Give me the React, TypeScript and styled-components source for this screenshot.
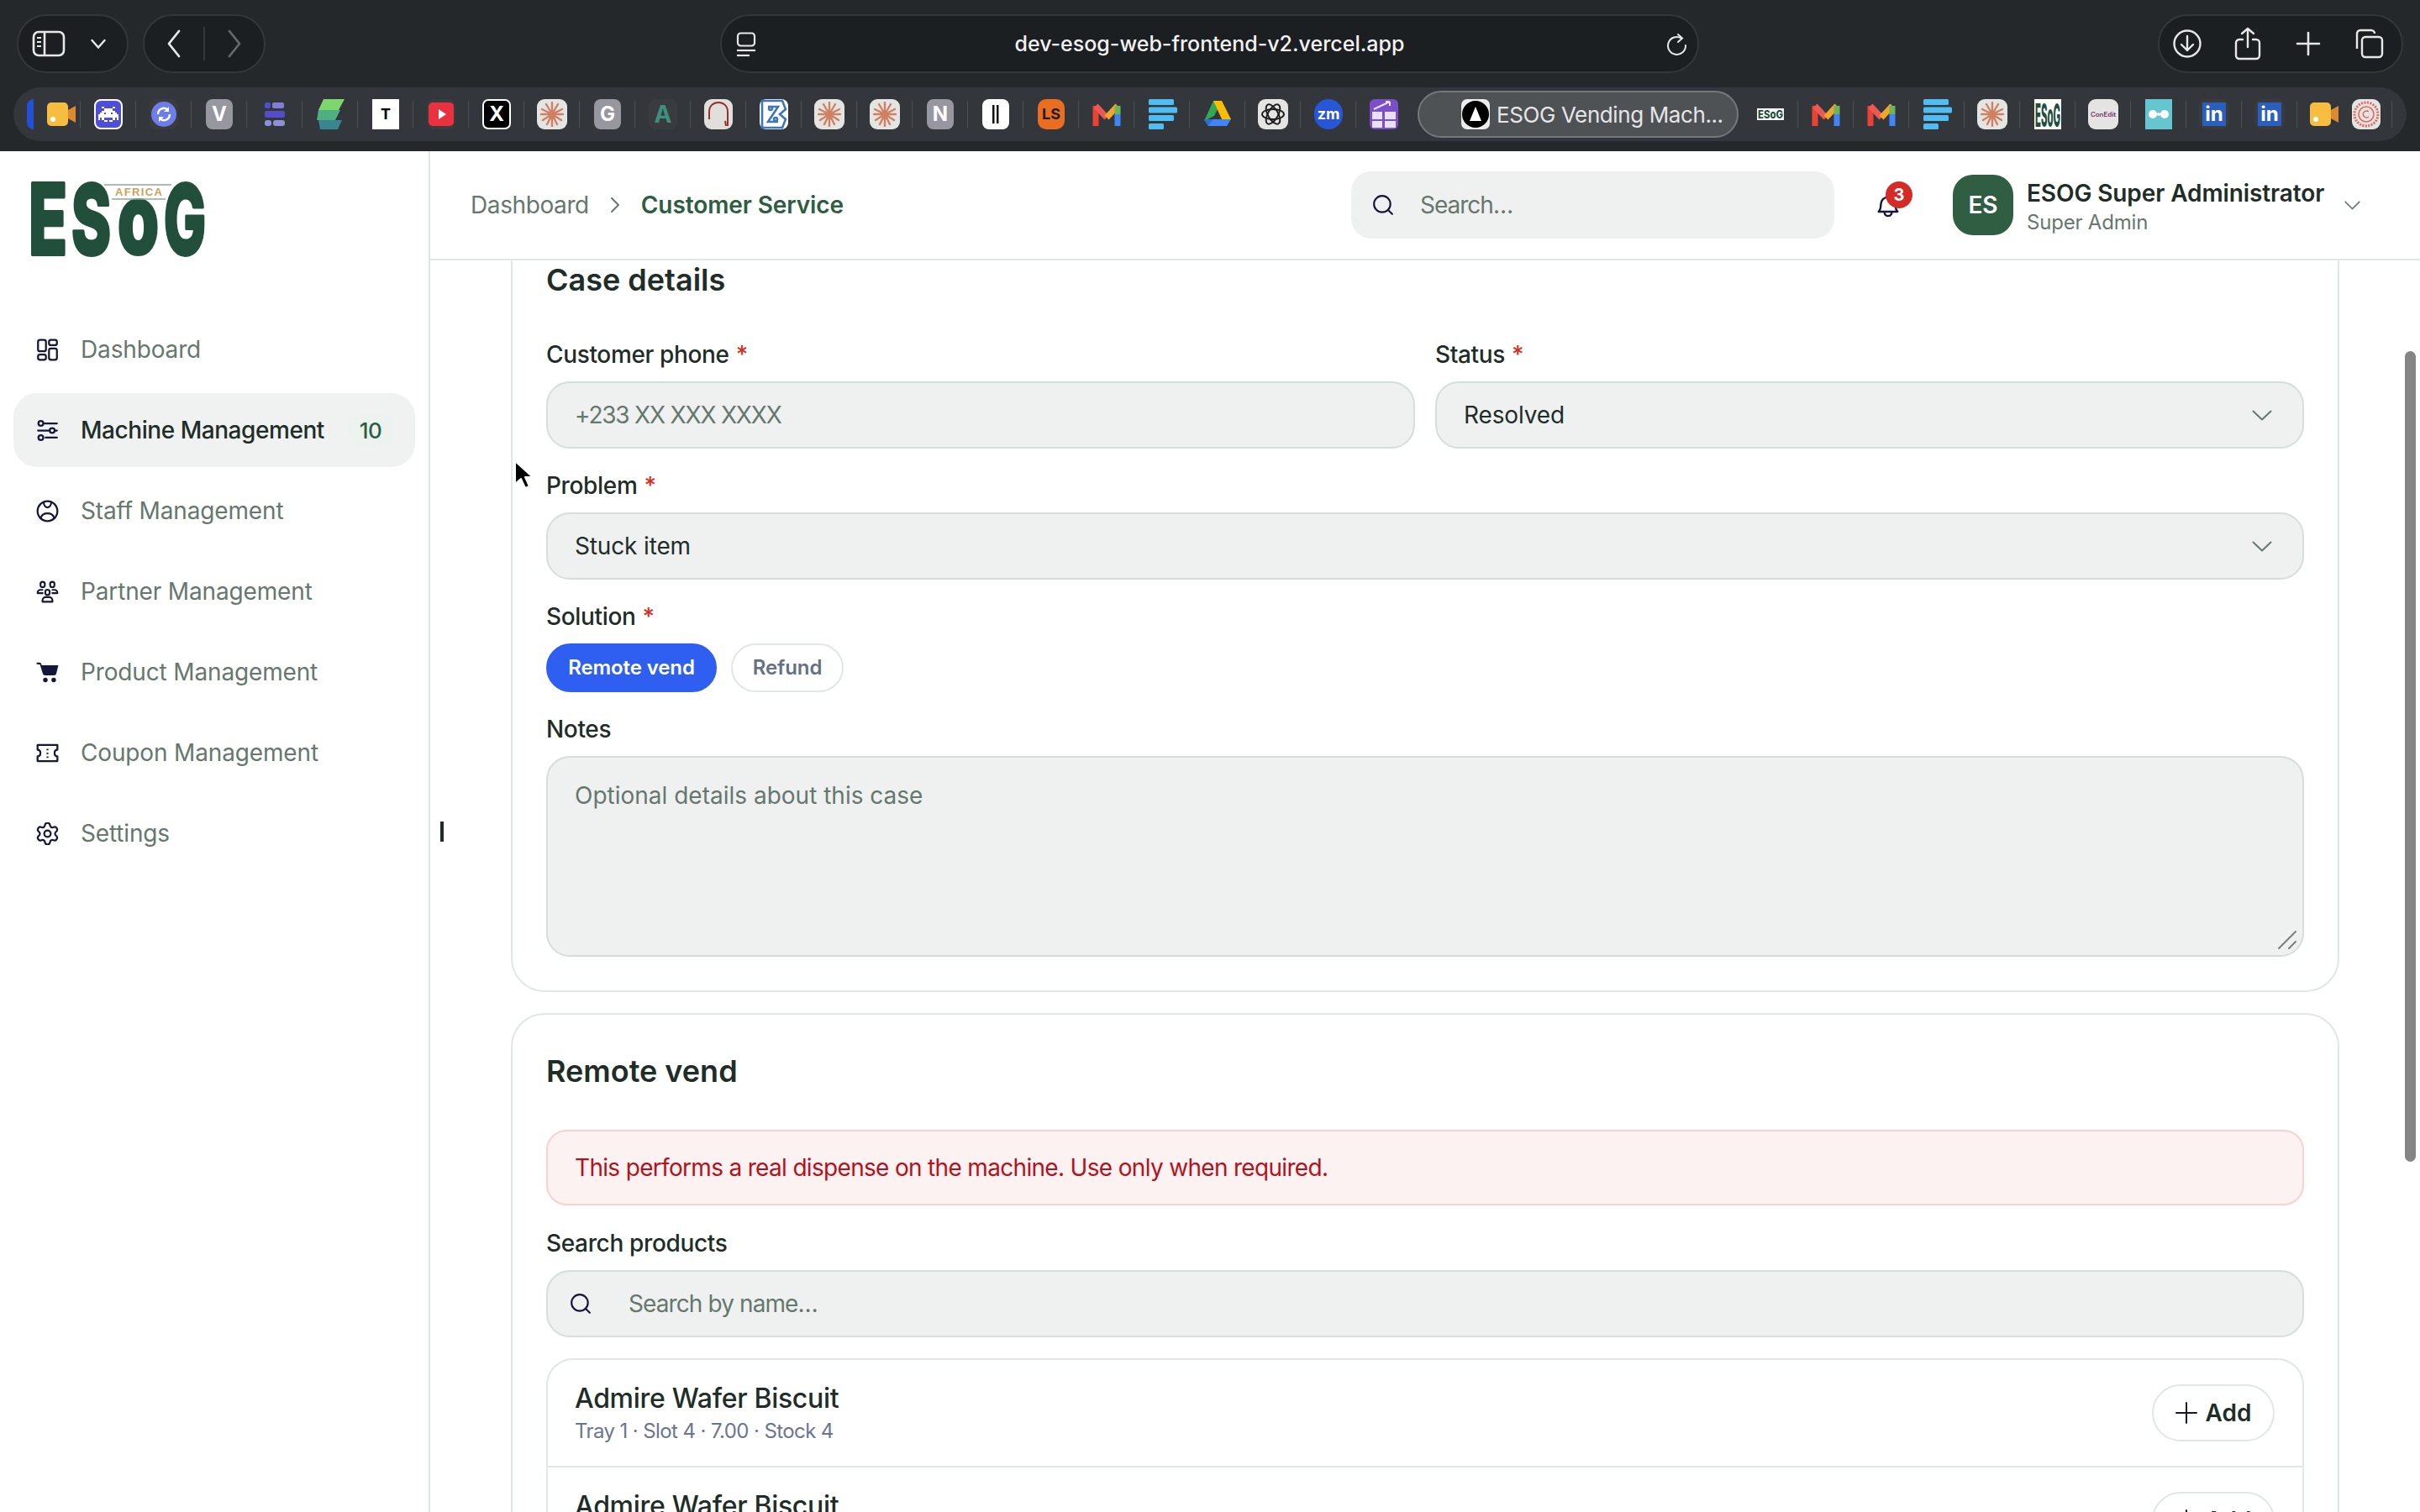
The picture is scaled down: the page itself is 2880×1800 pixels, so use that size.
import React from 'react'
import styled, { createGlobalStyle } from 'styled-components'
import { Settings } from 'lucide-react'

const Global = createGlobalStyle`
  html, body { margin: 0; padding: 0; background: #fff; }
  body { font-family: Inter, "Liberation Sans", sans-serif; color: #1f2d28; -webkit-font-smoothing: antialiased; }
  * { box-sizing: border-box; }
`

const Page = styled.div`
  position: relative;
  width: 2880px;
  height: 1800px;
  overflow: hidden;
  background: #fff;
  display: flex;
  flex-direction: column;
`

/* browser chrome */
const Chrome = styled.div`
  height: 180px;
  flex: none;
  background: #25282b;
  display: flex;
  flex-direction: column;
  padding-top: 17px;
`
const TopRow = styled.div`
  height: 70px;
  padding: 0 20px;
  display: flex;
  align-items: center;
  gap: 17px;
`
const Group = styled.div<{ $w: number; $ml?: number }>`
  width: ${p => p.$w}px;
  margin-left: ${p => p.$ml ?? 0}px;
  height: 70px;
  flex: none;
  display: flex;
  align-items: center;
  border-radius: 35px;
  background: #1c1f21;
  border: 2px solid #33373a;
`
const LeftGroup = styled(Group)`
  padding-left: 16px;
  gap: 30px;
`
const NavGroup = styled(Group)`
  justify-content: center;
  gap: 26px;
`
const NavDivider = styled.span`
  width: 2px;
  height: 40px;
  background: #34383b;
`
const UrlBar = styled(Group)`
  position: relative;
  justify-content: center;
  font-size: 25px;
  font-weight: 500;
  color: #f2f2f2;
`
const UrlLeading = styled.span`
  position: absolute;
  left: 17px;
  top: 19px;
  display: flex;
`
const UrlTrailing = styled.span`
  position: absolute;
  right: 12px;
  top: 20px;
  display: flex;
`
const ToolGroup = styled(Group)``
const ToolSlot = styled.span`
  width: 72px;
  display: flex;
  justify-content: center;
  &:first-child { margin-left: -3px; }
`
const BookmarkBar = styled.div`
  margin: 17px 0 0 16px;
  width: 2848px;
  height: 64px;
  border-radius: 32px;
  background: #33363a;
  display: flex;
  align-items: center;
`
const Cell = styled.div<{ $sep?: boolean }>`
  width: 66px;
  height: 64px;
  flex: none;
  display: flex;
  align-items: center;
  justify-content: center;
  position: relative;
  &::after {
    content: '';
    display: ${p => (p.$sep === false ? 'none' : 'block')};
    position: absolute;
    right: 0;
    top: 16px;
    bottom: 16px;
    width: 1px;
    background: #4c4f53;
  }
`
const FirstCell = styled(Cell)`
  width: 80px;
  justify-content: flex-end;
  padding-right: 6px;
  gap: 16px;
`
const LastCell = styled(Cell)`
  width: 113px;
  gap: 16px;
`
const Tile = styled.div<{ $bg?: string; $fg?: string; $r?: number; $w?: number; $h?: number; $fs?: number }>`
  width: ${p => p.$w ?? 34}px;
  height: ${p => p.$h ?? 36}px;
  flex: none;
  background: ${p => p.$bg ?? 'transparent'};
  color: ${p => p.$fg ?? '#fff'};
  border-radius: ${p => p.$r ?? 8}px;
  font-size: ${p => p.$fs ?? 24}px;
  font-weight: 700;
  display: flex;
  align-items: center;
  justify-content: center;
  line-height: 1;
`
const FramedTile = styled(Tile)`
  border: 2px solid #fff;
`
const Sliver = styled.div`
  width: 8px;
  height: 36px;
  background: #2450d8;
  border-radius: 8px 0 0 8px;
`
const ActiveTab = styled.div`
  width: 382px;
  height: 56px;
  margin-left: 7px;
  margin-right: 5px;
  flex: none;
  border-radius: 28px;
  background: #4e5255;
  border: 2px solid #76797c;
  padding-left: 50px;
  display: flex;
  align-items: center;
  gap: 8px;
  font-size: 26px;
  letter-spacing: -0.4px;
  color: #e6e6e6;
  white-space: nowrap;
`

/* app */
const Shell = styled.div`
  flex: 1;
  min-height: 0;
  display: flex;
`
const Sidebar = styled.aside`
  width: 512px;
  flex: none;
  border-right: 2px solid #e1e7e5;
  padding: 37px 16px 0;
`
const LogoWrap = styled.div`
  height: 90px;
  margin: 0 0 65px 20px;
`
const Nav = styled.nav`
  display: flex;
  flex-direction: column;
  gap: 8px;
  width: 478px;
`
const NavItem = styled.div<{ $active?: boolean }>`
  height: 88px;
  border-radius: 28px;
  padding: 0 25px 0 27px;
  display: flex;
  align-items: center;
  gap: 26px;
  font-size: 28px;
  letter-spacing: ${p => (p.$active ? -0.45 : -0.15)}px;
  white-space: nowrap;
  font-weight: ${p => (p.$active ? 500 : 400)};
  color: ${p => (p.$active ? '#1f2d28' : '#66776e')};
  background: ${p => (p.$active ? '#eff2f0' : 'transparent')};
  svg { width: 27px; height: 27px; flex: none; color: #15173a; }
`
const NavLabel = styled.span`
  flex: 1;
`
const CountPill = styled.span`
  width: 56px;
  height: 38px;
  border-radius: 19px;
  background: #ecf3ee;
  color: #2d5e42;
  font-size: 26px;
  font-weight: 500;
  display: flex;
  align-items: center;
  justify-content: center;
`
const Main = styled.main`
  flex: 1;
  min-width: 0;
  display: flex;
  flex-direction: column;
`
const Header = styled.header`
  height: 130px;
  flex: none;
  border-bottom: 2px solid #e1e7e5;
  padding: 0 71px 0 48px;
  display: flex;
  align-items: center;
  position: relative;
  z-index: 1;
  background: #fff;
`
const Crumbs = styled.div`
  flex: 1;
  display: flex;
  align-items: center;
  gap: 24px;
  font-size: 28px;
  color: #66776e;
`
const CrumbHome = styled.span`
  letter-spacing: -0.4px;
`
const CrumbCurrent = styled.span`
  color: #2d5e42;
  font-weight: 600;
  letter-spacing: -0.1px;
`
const HeaderSearch = styled.div`
  width: 575px;
  height: 80px;
  border-radius: 24px;
  background: #eff1f0;
  display: flex;
  align-items: center;
  gap: 31px;
  padding-left: 25px;
  font-size: 28px;
  letter-spacing: -1px;
  color: #66776e;
`
const BellWrap = styled.div`
  position: relative;
  width: 26px;
  height: 32px;
  margin: 4px 64px 0 51px;
  color: #15173a;
`
const Badge = styled.span`
  position: absolute;
  left: 10px;
  top: -14px;
  width: 32px;
  height: 32px;
  border-radius: 50%;
  background: #d42b27;
  color: #fff;
  font-size: 20px;
  font-weight: 700;
  display: flex;
  align-items: center;
  justify-content: center;
`
const User = styled.div`
  display: flex;
  align-items: center;
  gap: 16px;
`
const Avatar = styled.div`
  width: 72px;
  height: 72px;
  border-radius: 24px;
  background: #2f5e43;
  color: #fff;
  font-size: 28px;
  font-weight: 600;
  display: flex;
  align-items: center;
  justify-content: center;
`
const UserText = styled.div`
  display: flex;
  flex-direction: column;
  width: 362px;
`
const UserName = styled.span`
  font-size: 28px;
  font-weight: 600;
  line-height: 42px;
  letter-spacing: -0.1px;
  white-space: nowrap;
`
const UserRole = styled.span`
  font-size: 24px;
  line-height: 28px;
  letter-spacing: -0.2px;
  color: #66776e;
`
const Content = styled.div`
  flex: 1;
  min-height: 0;
  overflow: hidden;
  padding: 0 96px;
`
const Card = styled.section`
  border: 2px solid #e1e7e5;
  border-radius: 40px;
  padding: 40px;
  & + & { margin-top: 25px; }
  &:first-child { margin-top: -46px; }
`
const CardTitle = styled.h2`
  margin: 0 0 41px;
  font-size: 36px;
  line-height: 54px;
  font-weight: 600;
`
const Row = styled.div`
  display: grid;
  grid-template-columns: 1fr 1fr;
  gap: 24px;
`
const Field = styled.div`
  margin-bottom: 23px;
  &:last-child { margin-bottom: 0; }
`
const Label = styled.div`
  height: 40px;
  padding-top: 1px;
  font-size: 28px;
  line-height: 40px;
  font-weight: 500;
  letter-spacing: -0.35px;
  margin-bottom: 13px;
`
const Star = styled.span`
  color: #d92d20;
  margin-left: 8px;
`
const Control = styled.div<{ $muted?: boolean }>`
  height: 80px;
  border-radius: 28px;
  background: #eff1f0;
  border: 2px solid #d5dedb;
  padding: 0 36px 0 32px;
  display: flex;
  align-items: center;
  justify-content: space-between;
  font-size: 28px;
  letter-spacing: -0.15px;
  color: ${p => (p.$muted ? '#66776e' : '#1f2d28')};
`
const PhoneHint = styled.span`
  letter-spacing: -1.2px;
`
const Pills = styled.div`
  display: flex;
  gap: 17px;
`
const Pill = styled.div<{ $active?: boolean }>`
  height: 58px;
  width: ${p => (p.$active ? 203 : 134)}px;
  padding-bottom: 2px;
  border-radius: 29px;
  font-size: 24px;
  font-weight: 600;
  letter-spacing: -0.1px;
  display: flex;
  align-items: center;
  justify-content: center;
  background: ${p => (p.$active ? '#2f5ff1' : '#fff')};
  color: ${p => (p.$active ? '#fff' : '#667085')};
  border: 2px solid ${p => (p.$active ? '#2f5ff1' : '#e1e7e5')};
`
const NotesBox = styled.div`
  position: relative;
  height: 239px;
  border-radius: 28px;
  background: #eff1f0;
  border: 2px solid #d5dedb;
  padding: 25px 32px;
  font-size: 28px;
  line-height: 40px;
  color: #66776e;
`
const Grip = styled.svg`
  position: absolute;
  right: 6px;
  bottom: 6px;
`
const Alert = styled.div`
  height: 90px;
  margin: 43px 0 24px;
  border-radius: 24px;
  background: #fdf2f2;
  border: 2px solid #fbd0d0;
  padding: 0 32px;
  display: flex;
  align-items: center;
  font-size: 28px;
  letter-spacing: -0.68px;
  color: #b3121d;
`
const SearchControl = styled(Control)`
  justify-content: flex-start;
  gap: 44px;
  padding-left: 26px;
  letter-spacing: -0.9px;
`
const ProductList = styled.div`
  margin-top: 25px;
  border: 2px solid #e1e7e5;
  border-radius: 32px;
`
const ProductRow = styled.div`
  height: 128px;
  padding: 0 33px 0 32px;
  display: flex;
  align-items: center;
  justify-content: space-between;
  border-bottom: 2px solid #e1e7e5;
`
const ProductName = styled.div`
  font-size: 32px;
  line-height: 44px;
  font-weight: 500;
  letter-spacing: -0.3px;
`
const ProductMeta = styled.div`
  font-size: 24px;
  line-height: 34px;
  letter-spacing: -0.6px;
  color: #6b7590;
`
const AddButton = styled.div`
  width: 146px;
  height: 68px;
  border-radius: 34px;
  border: 2px solid #e1e7e5;
  display: flex;
  align-items: center;
  justify-content: center;
  gap: 10px;
  font-size: 28px;
  font-weight: 600;
`

/* overlays */
const ScrollThumb = styled.div`
  position: absolute;
  left: 2862px;
  top: 418px;
  width: 13px;
  height: 965px;
  border-radius: 7px;
  background: #858585;
`
const Pointer = styled.svg`
  position: absolute;
  left: 610px;
  top: 546px;
`
const TextCaret = styled.div`
  position: absolute;
  left: 524px;
  top: 978px;
  width: 4px;
  height: 24px;
  background: #1f2d28;
`

const SearchGlyph = ({ size = 26 }: { size?: number }) => (
  <svg width={size} height={size} viewBox='0 0 24 24' fill='none' stroke='#15173a' strokeWidth='2' strokeLinecap='round' style={{ flex: 'none' }}>
    <circle cx='11' cy='11' r='9' />
    <path d='M18 18l4 4' />
  </svg>
)

const Chevron = ({ w = 24, h = 13 }: { w?: number; h?: number }) => (
  <svg width={w} height={h} viewBox='0 0 24 13' fill='none' stroke='#66776e' strokeWidth='2' strokeLinecap='round' strokeLinejoin='round' preserveAspectRatio='none'>
    <path d='M1.5 1.5L12 11.5 22.5 1.5' />
  </svg>
)

const dashboardIcon = (
  <svg viewBox='0 0 24 24' fill='none' stroke='currentColor' strokeWidth='2'>
    <rect x='2' y='1.5' width='8.4' height='12' rx='2' />
    <rect x='2' y='17' width='8.4' height='5.5' rx='2' />
    <rect x='13.6' y='1.5' width='8.4' height='5.5' rx='2' />
    <rect x='13.6' y='10.5' width='8.4' height='12' rx='2' />
  </svg>
)
const machineIcon = (
  <svg viewBox='0 0 24 24' fill='none' stroke='currentColor' strokeWidth='2' strokeLinecap='round'>
    <circle cx='5' cy='4.5' r='2.6' />
    <path d='M8 4.5h14M2 12h12M20 12h2M10 19.5h12' />
    <circle cx='17' cy='12' r='2.6' />
    <circle cx='5' cy='19.5' r='2.6' />
  </svg>
)
const staffIcon = (
  <svg viewBox='0 0 24 24' fill='none' stroke='currentColor' strokeWidth='2' strokeLinecap='round'>
    <circle cx='12' cy='12' r='10.5' />
    <path d='M8 2.5c0 3 1.6 5.5 4 5.5s4-2.5 4-5.5' />
    <path d='M5 19c1-3 3.2-4.6 7-4.6s6 1.6 7 4.6' />
  </svg>
)
const partnerIcon = (
  <svg viewBox='0 0 24 24' fill='none' stroke='currentColor' strokeWidth='1.9' strokeLinecap='round' strokeLinejoin='round'>
    <rect x='4.6' y='1.5' width='4.6' height='5.6' rx='2.3' />
    <rect x='14.8' y='1.5' width='4.6' height='5.6' rx='2.3' />
    <rect x='9.7' y='9.8' width='4.6' height='5.6' rx='2.3' />
    <path d='M6.7 10H4.4C3 10 1.5 11.4 1.5 13.4h5.4M17.3 10h2.3c1.4 0 2.9 1.4 2.9 3.4h-5.4' />
    <path d='M6.7 22.5v-1.2c0-2 1.6-3.6 3.6-3.6h3.4c2 0 3.6 1.6 3.6 3.6v1.2z' />
  </svg>
)
const cartIcon = (
  <svg viewBox='0 0 24 24' fill='currentColor'>
    <path d='M0.5 1.5H3.4c1 0 1.8.6 2.1 1.6l.4 1.4H23.5L21.4 13c-.3 1.2-1.3 2-2.6 2H9.6c-1.2 0-2.3-.8-2.6-2L4 3.6 0.5 3.4z' />
    <circle cx='9.8' cy='20' r='2.4' />
    <circle cx='18.6' cy='20' r='2.4' />
  </svg>
)
const couponIcon = (
  <svg viewBox='0 0 24 24' fill='none' stroke='currentColor' strokeWidth='2' strokeLinejoin='round'>
    <path d='M1.5 3.5h21v5c-1.8 0-3 1.5-3 3.5s1.2 3.5 3 3.5v5h-21v-5c1.8 0 3-1.5 3-3.5s-1.2-3.5-3-3.5z' />
    <path d='M12 7.5v1.5M12 11.5v1.5M12 15.5v1.5' />
  </svg>
)

const navItems = [
  { label: 'Dashboard', icon: dashboardIcon },
  { label: 'Machine Management', icon: machineIcon, count: 10, active: true },
  { label: 'Staff Management', icon: staffIcon },
  { label: 'Partner Management', icon: partnerIcon },
  { label: 'Product Management', icon: cartIcon },
  { label: 'Coupon Management', icon: couponIcon },
  { label: 'Settings', icon: <Settings strokeWidth={1.7} viewBox='1.5 1.5 21 21' /> }
]

const Logo = () => (
  <svg width='220' height='92' viewBox='0 0 220 92' overflow='visible'>
    <g fill='#214f3c' stroke='#214f3c' strokeWidth='4' strokeLinejoin='round' fontFamily='Inter, sans-serif' fontWeight='800'>
      <text x='-2' y='86' fontSize='117' textLength='46' lengthAdjust='spacingAndGlyphs'>E</text>
      <text x='49' y='86' fontSize='115' textLength='47' lengthAdjust='spacingAndGlyphs'>S</text>
      <text x='104' y='85' fontSize='116' textLength='49' lengthAdjust='spacingAndGlyphs'>o</text>
      <text x='159' y='86' fontSize='115' textLength='50' lengthAdjust='spacingAndGlyphs'>G</text>
    </g>
    <path d='M88 3h80M97 20h64' stroke='#8fa99c' strokeWidth='1.5' />
    <text x='101' y='16' fontSize='13' fontWeight='700' fontFamily='"Liberation Sans", sans-serif' fill='#c9a25c' textLength='56' lengthAdjust='spacing'>AFRICA</text>
  </svg>
)

const sunburst = (
  <svg width='28' height='30' viewBox='0 0 28 30' stroke='#d08062' strokeWidth='2.4' strokeLinecap='round'>
    <path d='M14 15V1M14 15v14M14 15L7 3M14 15l7-12M14 15L2 9M14 15l12-6M14 15H1M14 15h13M14 15L3 22M14 15l11 7M14 15L8 27M14 15l6 12' />
  </svg>
)
const gmail = (
  <svg width='36' height='36' viewBox='0 0 36 36' fill='none' strokeWidth='7' strokeLinejoin='round'>
    <path d='M5 32V8' stroke='#ea4335' />
    <path d='M5 8l13 14' stroke='#ea5a55' />
    <path d='M18 22L31 8' stroke='#f0a52c' />
    <path d='M31 8v10' stroke='#6cb35a' />
    <path d='M31 18v14' stroke='#4285f4' />
  </svg>
)
const barsIcon = (
  <svg width='36' height='36' viewBox='0 0 36 36' fill='#4fbcf2'>
    <rect x='2' y='0' width='30' height='7' rx='1.5' />
    <rect x='2' y='9.5' width='34' height='7' rx='1.5' />
    <rect x='2' y='19' width='30' height='7' rx='1.5' />
    <rect x='2' y='29' width='18' height='7' rx='1.5' />
  </svg>
)
const cameraIcon = (
  <svg width='34' height='36' viewBox='0 0 34 36'>
    <rect x='0' y='4' width='25' height='28' rx='5' fill='#f6bd41' />
    <path d='M25 13l9-5v20l-9-5z' fill='#dc8a2e' />
    <circle cx='7' cy='24' r='3' fill='#fff' />
  </svg>
)
const invader = (
  <svg width='24' height='18' viewBox='0 0 11 8' fill='#fff' shapeRendering='crispEdges'>
    <path d='M2 0h1v1H2zM8 0h1v1H8zM3 1h5v1H3zM2 2h7v1H2zM1 3h2v1H1zM4 3h3v1H4zM8 3h2v1H8zM0 4h11v2H0zM0 6h1v1H0zM2 6h1v1H2zM8 6h1v1H8zM10 6h1v1h-1zM3 7h2v1H3zM6 7h2v1H6z' />
  </svg>
)
const syncMark = (
  <svg width='30' height='30' viewBox='0 0 30 30'>
    <circle cx='15' cy='15' r='15' fill='#6e7ee8' />
    <path d='M8 15a7 7 0 0 1 12-5M22 15a7 7 0 0 1-12 5' fill='none' stroke='#fff' strokeWidth='2.4' />
    <path d='M21 6v6h-6zM9 24v-6h6z' fill='#fff' />
  </svg>
)
const gridDots = (
  <svg width='28' height='36' viewBox='0 0 28 36' fill='#5a52e0' opacity='.85'>
    <rect x='2' y='4' width='7' height='7' rx='2' />
    <rect x='11' y='4' width='14' height='7' rx='2' fill='#8f8bf0' />
    <rect x='2' y='14' width='24' height='8' rx='2' />
    <rect x='2' y='25' width='8' height='7' rx='3' fill='#9da0f5' />
    <rect x='12' y='25' width='14' height='7' rx='3' fill='#9da0f5' />
  </svg>
)
const greenStack = (
  <svg width='34' height='36' viewBox='0 0 34 36'>
    <path d='M9 0h25l-7 13H3z' fill='#7ed66e' />
    <path d='M3 13h26l-6 12H1z' fill='#4fae82' />
    <path d='M3 25h28l-5 11H5z' fill='#3a8592' />
  </svg>
)
const ytMark = (
  <svg width='30' height='28' viewBox='0 0 30 28'>
    <rect width='30' height='28' rx='5' fill='#ea3140' />
    <path d='M12 8l9 6-9 6z' fill='#fff' />
  </svg>
)
const archMark = (
  <svg width='28' height='32' viewBox='0 0 28 32' fill='none' stroke='#93312c' strokeWidth='2'>
    <path d='M3 22V13C3 6 8 2 14 2s11 4 11 11v17' />
    <path d='M22 24l1 6' />
  </svg>
)
const bMark = (
  <svg width='32' height='36' viewBox='0 0 32 36' fill='none' stroke='#3d77b8' strokeWidth='2.6'>
    <path d='M2 2h24l4 10-7 6 7 6-4 10H2z' />
    <path d='M9 9h12l-12 18h12' />
    <circle cx='12' cy='11' r='2' />
    <circle cx='18' cy='24' r='2' />
  </svg>
)
const driveMark = (
  <svg width='34' height='36' viewBox='0 0 34 36'>
    <path d='M12 2h10l-9 18-12 6z' fill='#34a853' />
    <path d='M22 2l11 22-10 2L12 2z' fill='#fbbc04' />
    <path d='M1 24h32l-5 8H6z' fill='#4285f4' />
    <path d='M1 24h11l-6 8z' fill='#2b6fd6' />
  </svg>
)
const knot = (
  <svg width='30' height='30' viewBox='0 0 30 30' fill='none' stroke='#1b1b1b' strokeWidth='1.9'>
    <ellipse cx='15' cy='15' rx='13' ry='6' />
    <ellipse cx='15' cy='15' rx='13' ry='6' transform='rotate(60 15 15)' />
    <ellipse cx='15' cy='15' rx='13' ry='6' transform='rotate(120 15 15)' />
  </svg>
)
const calcMark = (
  <svg width='34' height='36' viewBox='0 0 34 36'>
    <rect width='34' height='36' rx='6' fill='#7a4fc9' />
    <rect x='3' y='15' width='12' height='9' fill='#e9e2f7' />
    <rect x='18' y='15' width='13' height='9' fill='#e9e2f7' />
    <rect x='3' y='26' width='12' height='8' fill='#e9e2f7' />
    <rect x='18' y='26' width='13' height='8' fill='#e9e2f7' />
    <path d='M5 12L24 3M24 3l-5 0M24 3v5' stroke='#e9e2f7' strokeWidth='2' fill='none' />
  </svg>
)
const tabMark = (
  <svg width='34' height='36' viewBox='0 0 34 36'>
    <rect width='34' height='36' rx='7' fill='#ececec' />
    <circle cx='17' cy='18' r='16' fill='#000' />
    <path d='M17 9l7 17H10z' fill='#fff' />
  </svg>
)
const bowtie = (
  <svg width='24' height='14' viewBox='0 0 24 14' fill='#fff'>
    <circle cx='5' cy='7' r='5' />
    <circle cx='19' cy='7' r='5' />
    <path d='M8 7l4-2 4 2-4 2z' />
  </svg>
)
const stamp = (
  <svg width='34' height='36' viewBox='0 0 34 36' fill='none' stroke='#e2685f'>
    <circle cx='17' cy='18' r='14' strokeWidth='3' strokeDasharray='2 1.5' />
    <circle cx='17' cy='18' r='9' strokeWidth='1.6' />
    <path d='M20 15a4 4 0 1 0 0 6' strokeWidth='1.6' />
  </svg>
)
const barsTwo = (
  <svg width='14' height='22' viewBox='0 0 14 22' fill='#111'>
    <rect x='3' width='2.5' height='22' />
    <rect x='8' width='2.5' height='22' />
  </svg>
)
const esogWide = (
  <svg width='32' height='14' viewBox='0 0 32 14' overflow='visible'>
    <rect width='32' height='14' fill='#fff' />
    <text x='1' y='12' fontSize='13' fontWeight='800' fontFamily='Inter, sans-serif' fill='#214f3c' textLength='30' lengthAdjust='spacingAndGlyphs'>ESoG</text>
  </svg>
)
const esogTall = (
  <svg width='32' height='36' viewBox='0 0 32 36' overflow='visible'>
    <rect width='32' height='36' fill='#fff' />
    <text x='1' y='33' fontSize='38' fontWeight='800' fontFamily='Inter, sans-serif' fill='#214f3c' textLength='30' lengthAdjust='spacingAndGlyphs'>ESoG</text>
  </svg>
)
const conEdit = (
  <svg width='30' height='8' viewBox='0 0 30 8' overflow='visible'>
    <text x='0' y='7' fontSize='7' fontWeight='600' fontFamily='Inter, sans-serif' fill='#7a2d68' textLength='30' lengthAdjust='spacingAndGlyphs'>ConEdit</text>
  </svg>
)

const claudeTile = <Tile $bg='#e4e4e2' $r={9} $w={36}>{sunburst}</Tile>
const inTile = (
  <Tile $bg='#3a3b3e' $r={9} $w={36}>
    <Tile $bg='#2a5fc0' $r={1} $w={28} $h={28} $fs={24}>in</Tile>
  </Tile>
)

const leftBookmarks: React.ReactNode[] = [
  <FramedTile $bg='#4d4fd8' $r={8}>{invader}</FramedTile>,
  <Tile $bg='#3a3b3e' $r={8}>{syncMark}</Tile>,
  <Tile $bg='#96979f' $r={8} $w={32}>V</Tile>,
  gridDots,
  greenStack,
  <Tile $bg='#fff' $fg='#000' $r={0} $w={32} $fs={18}>T</Tile>,
  <Tile $bg='#3a3b3e' $r={8}>{ytMark}</Tile>,
  <FramedTile $bg='#000' $fg='#fff' $r={7} $w={34} $fs={24}>X</FramedTile>,
  claudeTile,
  <Tile $bg='#96979f' $r={8} $w={32}>G</Tile>,
  <Tile $bg='#3a3b3e' $fg='#3f8f7c' $r={8} $fs={28}>A</Tile>,
  <Tile $bg='#e0dfdc' $r={9}>{archMark}</Tile>,
  <Tile $bg='#fff' $r={8}>{bMark}</Tile>,
  claudeTile,
  claudeTile,
  <Tile $bg='#96979f' $r={8} $w={32}>N</Tile>,
  <Tile $bg='#fff' $r={8} $w={32}>{barsTwo}</Tile>,
  <Tile $bg='#ea6e22' $fg='#1c1c1c' $r={10} $w={32} $fs={18}>LS</Tile>,
  gmail,
  barsIcon,
  driveMark,
  <Tile $bg='#e4e4e2' $r={9} $w={36}>{knot}</Tile>,
  <Tile $bg='#2756d6' $r={17} $w={34} $fs={18}>zm</Tile>,
  calcMark
]

const rightBookmarks: React.ReactNode[] = [
  esogWide,
  gmail,
  gmail,
  barsIcon,
  claudeTile,
  esogTall,
  <Tile $bg='#e4e4e2' $r={9} $w={36}>{conEdit}</Tile>,
  <Tile $bg='#66c6cf' $r={0} $w={32}>{bowtie}</Tile>,
  inTile,
  inTile
]

const BrowserChrome = () => (
  <Chrome>
    <TopRow>
      <LeftGroup $w={133}>
        <svg width='40' height='32' viewBox='0 0 40 32' fill='none' stroke='#e8e8e8' strokeWidth='2.6'>
          <rect x='2' y='2' width='36' height='28' rx='6' />
          <path d='M15 2v28' />
          <path d='M6 9h5M6 14h5M6 19h5' strokeWidth='2' />
        </svg>
        <svg width='18' height='12' viewBox='0 0 18 12' fill='none' stroke='#e8e8e8' strokeWidth='2.4' strokeLinecap='round'>
          <path d='M1.5 2L9 10.5 16.5 2' />
        </svg>
      </LeftGroup>
      <NavGroup $w={146}>
        <svg width='18' height='34' viewBox='0 0 18 34' fill='none' stroke='#e8e8e8' strokeWidth='2.8' strokeLinecap='round' strokeLinejoin='round'>
          <path d='M15 2L3 17l12 15' />
        </svg>
        <NavDivider />
        <svg width='18' height='34' viewBox='0 0 18 34' fill='none' stroke='#66696b' strokeWidth='2.8' strokeLinecap='round' strokeLinejoin='round'>
          <path d='M3 2l12 15L3 32' />
        </svg>
      </NavGroup>
      <UrlBar $w={1165} $ml={524}>
        <UrlLeading>
          <svg width='24' height='30' viewBox='0 0 24 30' fill='none' stroke='#e8e8e8' strokeWidth='2.2'>
            <rect x='2' y='1.5' width='20' height='15' rx='3.5' />
            <path d='M1 22h22' />
            <path d='M1 28h15' />
          </svg>
        </UrlLeading>
        dev-esog-web-frontend-v2.vercel.app
        <UrlTrailing>
          <svg width='24' height='28' viewBox='0 0 24 28' fill='none' stroke='#e8e8e8' strokeWidth='2' strokeLinecap='round'>
            <path d='M17 6.5A10.5 10.5 0 1 0 22 15' />
            <path d='M13 2l5 4.5-5 4.5' />
          </svg>
        </UrlTrailing>
      </UrlBar>
      <ToolGroup $w={292} $ml={529}>
        <ToolSlot>
          <svg width='36' height='36' viewBox='0 0 36 36' fill='none' stroke='#e8e8e8' strokeWidth='2.4' strokeLinecap='round' strokeLinejoin='round'>
            <circle cx='18' cy='18' r='15.5' />
            <path d='M18 9v17M11 19l7 7 7-7' />
          </svg>
        </ToolSlot>
        <ToolSlot>
          <svg width='32' height='40' viewBox='0 0 32 40' fill='none' stroke='#e8e8e8' strokeWidth='2.4' strokeLinecap='round' strokeLinejoin='round'>
            <path d='M16 2v22M9 8l7-6 7 6' />
            <path d='M10 15H6a4 4 0 0 0-4 4v15a4 4 0 0 0 4 4h20a4 4 0 0 0 4-4V19a4 4 0 0 0-4-4h-4' />
          </svg>
        </ToolSlot>
        <ToolSlot>
          <svg width='30' height='30' viewBox='0 0 30 30' fill='none' stroke='#e8e8e8' strokeWidth='2.6' strokeLinecap='round'>
            <path d='M15 2v26M2 15h26' />
          </svg>
        </ToolSlot>
        <ToolSlot>
          <svg width='36' height='36' viewBox='0 0 36 36' fill='none' stroke='#e8e8e8' strokeWidth='2.4'>
            <path d='M4 24V6a4 4 0 0 1 4-4h13a4 4 0 0 1 4 4' />
            <rect x='10' y='10' width='24' height='24' rx='4' />
          </svg>
        </ToolSlot>
      </ToolGroup>
    </TopRow>
    <BookmarkBar>
      <FirstCell>
        <Sliver />
        {cameraIcon}
      </FirstCell>
      {leftBookmarks.map((node, i) => (
        <Cell key={i} $sep={i !== leftBookmarks.length - 1}>{node}</Cell>
      ))}
      <ActiveTab>
        {tabMark}
        <span>ESOG Vending Mach...</span>
      </ActiveTab>
      {rightBookmarks.map((node, i) => (
        <Cell key={i}>{node}</Cell>
      ))}
      <LastCell>
        {cameraIcon}
        <Tile $bg='#e4e4e2' $r={9} $w={34}>{stamp}</Tile>
      </LastCell>
    </BookmarkBar>
  </Chrome>
)

const SideNav = () => (
  <Sidebar>
    <LogoWrap><Logo /></LogoWrap>
    <Nav>
      {navItems.map(item => (
        <NavItem key={item.label} $active={item.active}>
          {item.icon}
          <NavLabel>{item.label}</NavLabel>
          {item.count && <CountPill>{item.count}</CountPill>}
        </NavItem>
      ))}
    </Nav>
  </Sidebar>
)

const TopBar = () => (
  <Header>
    <Crumbs>
      <CrumbHome>Dashboard</CrumbHome>
      <svg width='14' height='22' viewBox='0 0 14 22' fill='none' stroke='#66776e' strokeWidth='2' strokeLinecap='round' strokeLinejoin='round'>
        <path d='M3 3l8 8-8 8' />
      </svg>
      <CrumbCurrent>Customer Service</CrumbCurrent>
    </Crumbs>
    <HeaderSearch>
      <SearchGlyph size={26} />
      Search…
    </HeaderSearch>
    <BellWrap>
      <svg width='26' height='30' viewBox='0 0 30 34' fill='none' stroke='currentColor' strokeWidth='2.8' strokeLinecap='round' strokeLinejoin='round'>
        <path d='M2 25c2-2 3-5 3-10a10 10 0 0 1 20 0c0 5 1 8 3 10z' />
        <path d='M10 26a5 5 0 0 0 10 0' />
      </svg>
      <Badge>3</Badge>
    </BellWrap>
    <User>
      <Avatar>ES</Avatar>
      <UserText>
        <UserName>ESOG Super Administrator</UserName>
        <UserRole>Super Admin</UserRole>
      </UserText>
      <Chevron w={19} h={11} />
    </User>
  </Header>
)

const Required = () => <Star>*</Star>

const CaseDetails = () => (
  <Card>
    <CardTitle>Case details</CardTitle>
    <Row>
      <Field>
        <Label>Customer phone<Required /></Label>
        <Control $muted><PhoneHint>+233 XX XXX XXXX</PhoneHint></Control>
      </Field>
      <Field>
        <Label>Status<Required /></Label>
        <Control>Resolved<Chevron /></Control>
      </Field>
    </Row>
    <Field>
      <Label>Problem<Required /></Label>
      <Control>Stuck item<Chevron /></Control>
    </Field>
    <Field>
      <Label>Solution<Required /></Label>
      <Pills>
        <Pill $active>Remote vend</Pill>
        <Pill>Refund</Pill>
      </Pills>
    </Field>
    <Field>
      <Label>Notes</Label>
      <NotesBox>
        Optional details about this case
        <Grip width='24' height='24' viewBox='0 0 24 24' stroke='#7c7c7c' strokeWidth='2' strokeLinecap='round'>
          <path d='M2 22L22 2M14 22l8-8' />
        </Grip>
      </NotesBox>
    </Field>
  </Card>
)

const products = ['Admire Wafer Biscuit', 'Admire Wafer Biscuit']

const RemoteVend = () => (
  <Card>
    <CardTitle>Remote vend</CardTitle>
    <Alert>This performs a real dispense on the machine. Use only when required.</Alert>
    <Label>Search products</Label>
    <SearchControl $muted>
      <SearchGlyph size={26} />
      Search by name…
    </SearchControl>
    <ProductList>
      {products.map((name, i) => (
        <ProductRow key={i}>
          <div>
            <ProductName>{name}</ProductName>
            <ProductMeta>Tray 1 · Slot 4 · 7.00 · Stock 4</ProductMeta>
          </div>
          <AddButton>
            <svg width='26' height='26' viewBox='0 0 26 26' stroke='#15173a' strokeWidth='2' strokeLinecap='round'>
              <path d='M13 1v24M1 13h24' />
            </svg>
            Add
          </AddButton>
        </ProductRow>
      ))}
    </ProductList>
  </Card>
)

export default function App () {
  return (
    <Page>
      <Global />
      <BrowserChrome />
      <Shell>
        <SideNav />
        <Main>
          <TopBar />
          <Content>
            <CaseDetails />
            <RemoteVend />
          </Content>
        </Main>
      </Shell>
      <ScrollThumb />
      <TextCaret />
      <Pointer width='26' height='38' viewBox='0 0 26 38'>
        <path d='M3 3v27l7-6 5 11 5-2-5-11h9z' fill='#000' stroke='#fff' strokeWidth='2' strokeLinejoin='round' />
      </Pointer>
    </Page>
  )
}
